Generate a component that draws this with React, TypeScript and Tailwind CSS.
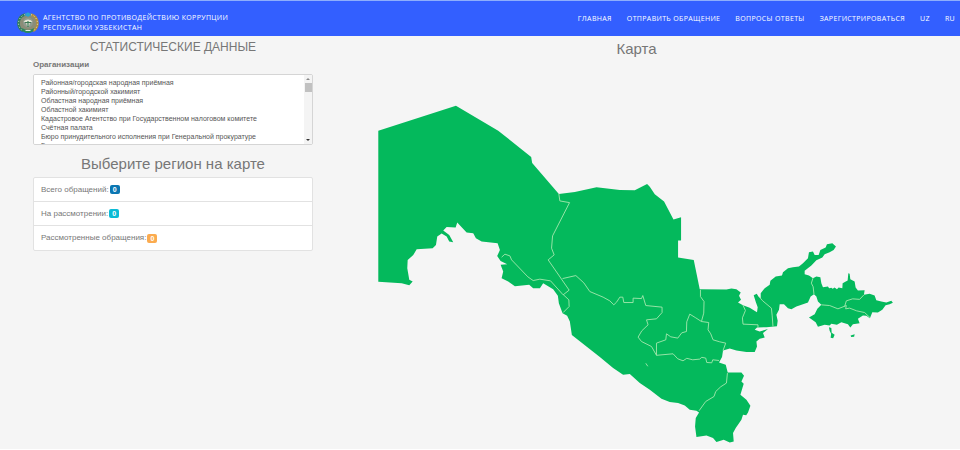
import React, { useState } from 'react';

const navLinks = ['Главная', 'Отправить обращение', 'Вопросы ответы', 'Зарегистрироваться', 'UZ', 'RU'];

const organizations = [
    'Районная/городская народная приёмная',
    'Районный/городской хакимият',
    'Областная народная приёмная',
    'Областной хакимият',
    'Кадастровое Агентство при Государственном налоговом комитете',
    'Счётная палата',
    'Бюро принудительного исполнения при Генеральной прокуратуре',
    'Генеральная прокуратура',
    'Министерство юстиции',
    'Министерство финансов',
    'Министерство здравоохранения',
    'Министерство внутренних дел',
];

const stats = [
    { label: 'Всего обращений:', value: 0, color: 'bg-[#0b76b2]' },
    { label: 'На рассмотрении:', value: 0, color: 'bg-[#0bbbd6]' },
    { label: 'Рассмотренные обращения:', value: 0, color: 'bg-[#fbab4f]' },
];

const country =
    'M378.3 130.7L456 105.7L498.3 130.7L531.3 157L532.3 163L559 194L575 192L596.7 187.3L620 190L635 190.3L647.3 184L650 186.7L655 194.3L664.3 201.7L673.7 219.7L681.3 217.3V240.7H678.3V257.7L694 260L700 289.5L726.7 289.7L731.7 288.7L736.7 289.3L741 292.7L739.3 296L741.3 300L738.3 302.7L743.3 305.3L750 308L757.3 312.3L758 307.3L756 302L754 295.3L757 294L759.3 297.3L761 298.3V293.3L765 288.3L770 285L770.7 281L776 276.7L782.3 275.7L783.3 272.3L788.3 268.3L793.3 267.3L799.3 266.7L803.3 263.3L808.3 258.3L809.3 252.3L813.3 251.7L815 255H819L820.7 250L826 247.7L827.3 244.3L832.7 243.3L836.3 246.7L834 250L830 252.3L825 254.3L822.7 257.7L816.7 260.3L811.7 265.7L805 271V274.3L809.3 275.7L813.3 278.3L816.7 276.7L820.7 277.3L821.7 283.3L823.3 287.3L828.3 286.7L829.5 288.4L831.7 287.8L833 288.8L835 287.7L837.3 289.3L839 287.7L842.7 288.3L843 283.3L848 280.7L848.7 273.3L850 274L850.7 279.3L855 281.7L856 287.7L858.3 290.7L865 290.3L864.3 295L870 294L875 295.7L876.7 300.3L881.7 301.7L886.7 302.7L891.7 301L893.3 303L890 304.3L886 305.3L882.7 310L878.3 312.7L872.7 312.3L870.3 318.3L866.7 316L863.3 315.7L858.3 319L860 323.3L853.3 324.3L850.7 327.7L848.3 324.3L841.7 322.3L837.3 325L831.7 324L830 325.7L825 325L818.3 327L816 322.3L809.3 317.7L815 314.3L817.7 309L821.7 305L818.3 301.7L816.7 296.7L814.3 294.3L811 296.7L808.3 302.7L803.3 304.3L796.7 306.7L791.7 309.3L788.3 308.3L784.3 304.3H780L779.3 310L776.7 315L778 321L777.3 326.3L766.7 327.3L757.3 327.7L755 330L760 331.7L768.3 329.3L763.3 333.3L765 337.7L760 339L756.7 341.7L757.3 346.7L755 352.3H746.7L736.7 350.7L730 348.7L723.3 350.7L722.3 357.3L719.3 362.7L726 365L728 372.7H741.7L744.3 376L741.7 381.7L744 384L742.7 388.3L740.7 395L746.7 400L750.7 406L748.3 412.7L746.5 415.5L743.3 415L741.7 420L736 428.3L733.3 433.3L734 441.7L730 442.7L724 440L716.7 442.3L713.3 438.3L706.7 435.7L696.7 437.3L695.3 426.7L696 418.3L699.3 412.7L696.7 411L690 410L685 405.7L678.3 403.3L670 402.3L661.7 399L650 390L640 383.3L630 374.3L623.3 375L613.3 368.3L600 357.3L572 335.3L570 321.7L567.3 316L562.7 313.3L559 303.3L558 296L553.3 289.3L543.3 283.3L540 288.3L533.3 288.3L529.3 285L515 286.3L508.3 281.7L501.7 278.3L503.3 271.7L500.7 265L507.3 264.3L500.7 261L497.3 256L500 250L497.7 243.3L481.7 241.7L476 238.3L473.3 233.3L466.7 232.7L457.3 222.7L455.7 227.7L446.7 227L443.3 230.7L449.3 235L453.3 242.3L449.3 241.7L446.7 236.7L441.7 233.7L437.3 236.7L436 245L432.7 248.3L416.7 249.3L413.3 255L407.7 260L407.3 268.3L409.3 280L412.7 281.7L409.3 285.3L401.7 283.3L378.3 282Z';

const enclaves = [
    'M829.3 327.3L831.7 328.3L832 333L835 335L833.5 338.5L831 338L831.5 334L830 331Z',
    'M851 335.7L855 334.5L854.5 337L851.5 337.2Z',
];

const borders = [
    'M559 194L560 201L569.7 202.7L552.7 236L551.7 248.3L554.3 255L548.3 260L569.3 290.3L563.3 295L550.7 281L540 279.3L533.3 280.7L528 277L511.7 260L510 256L505 254.3L501.7 257.3',
    'M563.3 294.7L569 300L569.3 306.7L563.3 312.7',
    'M562.7 278.7L576 275.7L584 283L590 291.7L603.3 297.3L610 301L614 305L617 302L620 297.3H623L624 302.7H633.3V298.3L641.7 298.7L643 295.7L646 305.7L662.3 307.3V312.7L656.7 319L646.7 320L648.3 325L642 331L638.3 337.3L641.7 341.7L651.7 346.7L656.7 355.5',
    'M656.7 355.5V343.3L666 340L666.7 334L671 337L678 338.3L682 333L686.7 331.7L687 322L690 314.3L696 318L701.7 321.7L709 322.7L708.3 330L711 334L713.3 340L720 342L726 343.3L723.3 350.7',
    'M656.7 355.5L673.3 354L678 359L683.3 361L687 358.5L693 360L700 359.3L702 357.5L706 358.3L707 362.7L712 363L713 360L719.3 360.7',
    'M700.7 290V296.7L704.3 301.7L704 313.3L701.7 321.7',
    'M743.3 305.3L745.7 310.7L742.7 318L743.3 324.3L758.3 325V328',
    'M759.3 296.7L763 301L771.7 308.3L772.5 316L773.3 326.7',
    'M813.3 278.3L811.7 283.3L813.5 287L814.3 294.3',
    'M821.7 305L830 305.7L838.3 309L846.7 305.7L846 309L850 308.3L857 311L865 312.7L870.3 317.7',
    'M845 306.7L846.7 301L853 299L860 299.5L864.3 295',
    'M727.7 373.3L726.7 383.3L721 387L716 391.7L714.3 396.7L706 401.7L699.3 411',
    'M646 363.5L648 366.5',
];

const Emblem: React.FC = () => (
    <svg viewBox="0 0 22 22" className="h-[22px] w-[22px] shrink-0" aria-hidden="true">
        <circle cx="11" cy="11" r="9" fill="#8b8d78" />
        <path d="M8 2.6A9 9 0 0 0 6 19" fill="none" stroke="#2f7d5b" strokeWidth="2.6" />
        <path d="M14 2.6A9 9 0 0 1 16 19" fill="none" stroke="#b08d3c" strokeWidth="2.6" />
        <path d="M8 2.6A9 9 0 0 0 6 19M14 2.6A9 9 0 0 1 16 19" fill="none" stroke="#e1e7dc" strokeWidth="1" strokeDasharray="1 2" />
        <path d="M11 0l1.2 1.2L14 1l-.8 1.6.8 1.6-1.9-.2L11 5.2 9.9 4 8 4.2l.8-1.6L8 1l1.8.2z" fill="#2aa5cf" />
        <circle cx="11" cy="10.5" r="5" fill="#8f9a8e" />
        <path d="M6.5 9.5Q11 5.500 15.5 9.5L13 10.5 12 14h-2l-1-3.500z" fill="#e6e6d6" />
        <path d="M8 10.5h6M11 9v6" stroke="#3b7b55" strokeWidth="1.2" />
        <path d="M5 16q6 4 12 0l-1 3.500q-5 3-10 0z" fill="#2a8a5c" />
        <path d="M8.5 18.5h5" stroke="#e5ece8" strokeWidth="1" />
    </svg>
);

const TopBar: React.FC = () => (
    <header className="flex items-center justify-between border-t border-[#8eaefc] bg-[#335fff] pl-[17px] pr-[5px] font-['Open_Sans',sans-serif] text-[7px] leading-[10px] tracking-wider text-white uppercase">
        <a href="#home" className="flex h-[35px] items-center gap-1 pt-[9px]">
            <Emblem />
            <span>
                Агентство по противодействию коррупции
                <br />
                Республики Узбекистан
            </span>
        </a>
        <nav className="flex gap-[15px]">
            {navLinks.map((link) => (
                <a key={link} href="#" className="font-medium whitespace-nowrap">
                    {link}
                </a>
            ))}
        </nav>
    </header>
);

const Stats: React.FC = () => {
    const [selected, setSelected] = useState<string[]>([]);

    return (
        <section className="text-[8px] text-[#777]">
            <h2 className="text-center text-[12px] leading-5">СТАТИСТИЧЕСКИЕ ДАННЫЕ</h2>
            <label htmlFor="organizations" className="mt-[3px] block leading-[10px] font-bold">
                Ораганизации
            </label>
            <div className="relative mt-1">
                <select
                    id="organizations"
                    multiple
                    value={selected}
                    onChange={(e) => setSelected(Array.from(e.target.selectedOptions, (o) => o.value))}
                    className="block h-[71px] w-full overflow-y-scroll rounded-xs border border-[#d5d5d5] bg-white py-[3px] pl-[5px] text-[7px] text-[#555] [scrollbar-width:none]"
                >
                    {organizations.map((name) => (
                        <option key={name} className="min-h-0 px-0.5 py-px">
                            {name}
                        </option>
                    ))}
                </select>
                <div className="pointer-events-none absolute inset-y-px right-px flex w-2 flex-col items-center bg-[#f4f4f4] py-[3px]" aria-hidden="true">
                    <svg viewBox="0 0 4 2" className="h-0.5 w-1">
                        <path d="M0 2L2 0L4 2Z" fill="#888" />
                    </svg>
                    <div className="mt-[3px] h-[9px] w-[7px] bg-[#c1c1c1]" />
                    <svg viewBox="0 0 4 2" className="mt-auto h-0.5 w-1">
                        <path d="M0 0L2 2L4 0Z" fill="#333" />
                    </svg>
                </div>
            </div>
            <h2 className="mt-[7px] mb-px text-center text-[15px] leading-6">Выберите регион на карте</h2>
            <ul className="divide-y divide-[#e2e2e2] rounded-xs border border-[#e2e2e2] bg-white">
                {stats.map((item) => (
                    <li key={item.label} className="flex h-6 items-center gap-px px-[7px]">
                        {item.label}
                        <span className={`${item.color} rounded-xs px-[3px] text-[7px] leading-[9px] font-bold text-white`}>{item.value}</span>
                    </li>
                ))}
            </ul>
        </section>
    );
};

const RegionMap: React.FC = () => (
    <section>
        <h2 className="text-center text-[15px] leading-6 text-[#777]">Карта</h2>
        <svg viewBox="378 105 518 338" className="mx-auto mt-11 block w-4/5" role="img" aria-label="Карта">
            <path d={country} fill="#04b95c" />
            {enclaves.map((d) => (
                <path key={d} d={d} fill="#04b95c" />
            ))}
            {borders.map((d) => (
                <path key={d} d={d} fill="none" stroke="#a5e8ae" strokeWidth="0.9" strokeLinejoin="round" />
            ))}
        </svg>
    </section>
);

export default function App() {
    return (
        <div className="font-['Liberation_Sans',Arial,sans-serif]">
            <TopBar />
            <main className="grid grid-cols-1 bg-[#f5f5f5] px-4 pt-px pb-1.5 sm:grid-cols-[280px_1fr] sm:pr-0 sm:pl-[33px]">
                <Stats />
                <RegionMap />
            </main>
        </div>
    );
}
